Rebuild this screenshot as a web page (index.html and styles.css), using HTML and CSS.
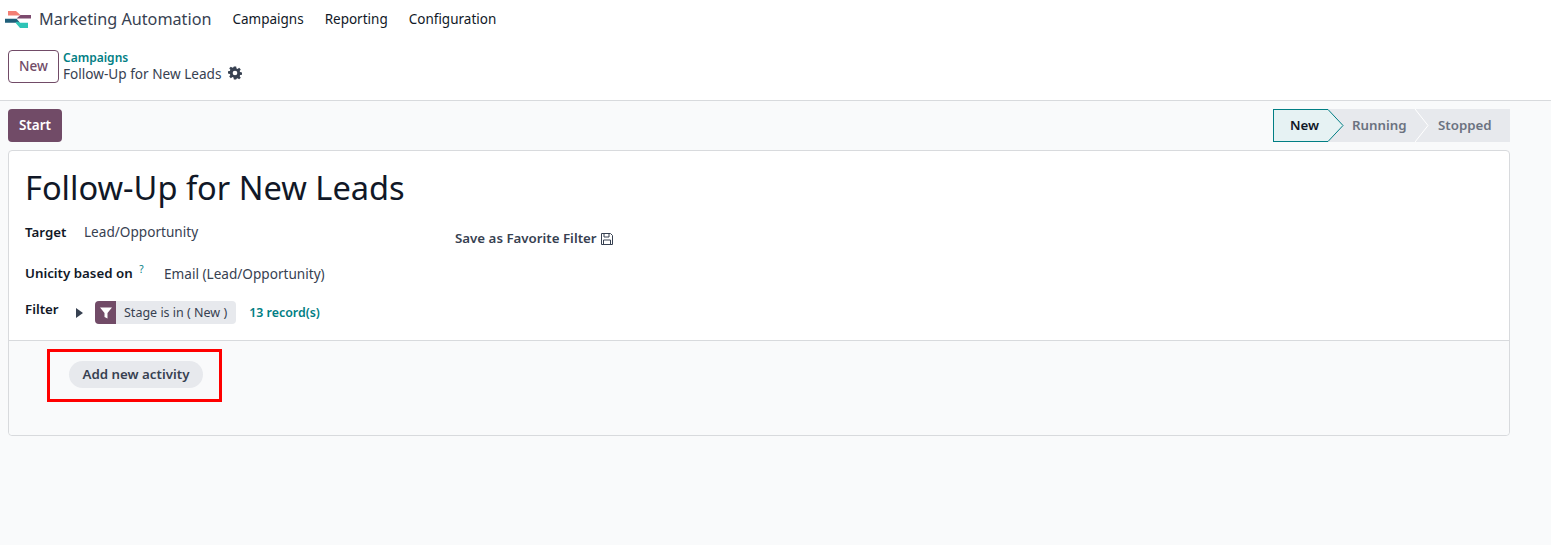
FILE: index.html
```html
<!DOCTYPE html>
<html lang="en">
<head>
    <meta charset="UTF-8" />
    <title>Marketing Automation</title>
    <link rel="stylesheet" href="styles.css">
</head>
<body>
    <header class="navbar">
        <svg class="app-logo" width="26" height="18" viewBox="0 0 26 18">
            <path d="M3 1h8l5 4.500H3z" fill="#f27f74"/>
            <path d="M15.500 5H26v3.500H11.500z" fill="#7c4a6e"/>
            <path d="M0 8.800h11.500l3.500 3.900H0z" fill="#1f5f7a"/>
            <path d="M10.500 12.800L12 11.500l3 1.300h8V18h-8z" fill="#2ec4b6"/>
        </svg>
        <span class="app-name">Marketing Automation</span>
        <nav class="menu">
            <a>Campaigns</a>
            <a>Reporting</a>
            <a>Configuration</a>
        </nav>
    </header>

    <div class="control-panel">
        <button class="btn-new">New</button>
        <div class="breadcrumb">
            <a class="crumb-link">Campaigns</a>
            <div class="crumb-current">
                Follow-Up for New Leads
                <svg width="14" height="14" viewBox="0 0 24 24"><path fill="#374151" fill-rule="evenodd" d="M10 1h4l.6 3.200 1.800.8L19.100 3.100l2.800 2.800-1.900 2.700.8 1.800 3.200.6v4l-3.200.6-.8 1.800 1.900 2.700-2.800 2.800-2.700-1.900-1.800.8L14 23h-4l-.6-3.200-1.800-.8-2.700 1.900-2.800-2.800L4 15.400l-.8-1.800L0 13V9l3.200-.6.8-1.800-1.900-2.700 2.800-2.800L7.600 3l1.800-.8zM12 8a4 4 0 1 0 0 8 4 4 0 0 0 0-8z"/></svg>
            </div>
        </div>
    </div>

    <main class="content">
        <div class="status-row">
            <button class="btn-start">Start</button>
            <div class="statusbar">
                <span class="stage stage-new">
                    New
                    <svg class="tip" width="16" height="33" viewBox="0 0 16 33"><path d="M0 .5L15 16.500 0 32.500" fill="#e6f2f3" stroke="#017e84"/></svg>
                </span>
                <span class="stage stage-running">
                    Running
                    <svg class="tip" width="14" height="33" viewBox="0 0 14 33"><path d="M0 0L13 16.500 0 33" fill="none" stroke="#fff"/></svg>
                </span>
                <span class="stage stage-stopped">Stopped</span>
            </div>
        </div>

        <section class="sheet">
            <div class="sheet-top">
                <h1>Follow-Up for New Leads</h1>
                <div class="fields">
                    <div class="field-col">
                        <div class="field field-target">
                            <label>Target</label>
                            <span>Lead/Opportunity</span>
                        </div>
                        <div class="field field-unicity">
                            <label>Unicity based on <sup>?</sup></label>
                            <span class="value">Email (Lead/Opportunity)</span>
                        </div>
                        <div class="field field-filter">
                            <label>Filter</label>
                            <i class="caret"></i>
                            <span class="tag">
                                <span class="tag-icon">
                                    <svg width="12" height="12" viewBox="0 0 12 12"><path fill="#fff" d="M0 .5h12L7.500 6v5.500l-3-1.500V6z"/></svg>
                                </span>
                                <span class="tag-text">Stage is in ( New )</span>
                            </span>
                            <a class="records">13 record(s)</a>
                        </div>
                    </div>
                    <div class="save-filter">
                        Save as Favorite Filter
                        <svg width="12" height="12" viewBox="0 0 12 12"><path fill="none" stroke="#374151" d="M.5.500h9l2 2v9H.500z M3 .500v3.500h5V.500 M2.500 11.500V7h7v4.500"/></svg>
                    </div>
                </div>
            </div>
            <div class="sheet-bottom">
                <div class="highlight">
                    <button class="btn-activity">Add new activity</button>
                </div>
            </div>
        </section>
    </main>
</body>
</html>
```

FILE: styles.css
```css
* {
    box-sizing: border-box;
}

body {
    margin: 0;
    height: 545px;
    overflow: hidden;
    background: #f9fafb;
    font-family: "Noto Sans", sans-serif;
    font-size: 13px;
    color: #374151;
}

button {
    font-family: inherit;
    cursor: pointer;
}

.navbar {
    display: flex;
    align-items: center;
    height: 37px;
    padding-left: 5px;
    background: #fff;
}

.app-logo {
    margin-right: 8px;
}

.app-name {
    font-size: 16.200px;
    color: #374151;
}

.menu {
    display: flex;
    gap: 21px;
    margin-left: 21px;
    color: #111827;
    font-size: 13.500px;
}

.control-panel {
    display: flex;
    align-items: center;
    gap: 4px;
    height: 64px;
    padding: 0 8px 4px;
    background: #fff;
    border-bottom: 1px solid #d8dadd;
}

.btn-new {
    width: 51px;
    height: 33px;
    padding: 0 0 2px;
    background: #fff;
    border: 1px solid #714b67;
    border-radius: 4px;
    color: #714b67;
    font-size: 13.500px;
    font-weight: 500;
}

.breadcrumb {
    display: flex;
    flex-direction: column;
    padding-bottom: 2px;
}

.crumb-link {
    color: #017e84;
    font-size: 12px;
    font-weight: 600;
    line-height: 15px;
}

.crumb-current {
    display: flex;
    align-items: center;
    gap: 7px;
    font-size: 13.600px;
    line-height: 17px;
}

.content {
    padding: 8px 41px 0 8px;
}

.status-row {
    display: flex;
    justify-content: space-between;
    align-items: center;
    height: 33px;
    margin-bottom: 8px;
}

.btn-start {
    width: 54px;
    height: 33px;
    padding: 0 0 2px;
    background: #714b67;
    border: none;
    border-radius: 4px;
    color: #fff;
    font-size: 13.500px;
    font-weight: 600;
}

.statusbar {
    display: flex;
    height: 33px;
    background: #e7e9ed;
    color: #6b7280;
    font-size: 13.300px;
    font-weight: 600;
}

.stage {
    display: flex;
    align-items: center;
    position: relative;
    padding-bottom: 2px;
}

.stage-new {
    width: 55px;
    padding-left: 16px;
    background: #e6f2f3;
    border: 1px solid #017e84;
    border-right: none;
    color: #111827;
}

/* arrow tips hang over the next stage */
.tip {
    position: absolute;
    left: 100%;
    top: 0;
}

.stage-new .tip {
    top: -1px;
}

.stage-running {
    width: 87px;
    padding-left: 24px;
}

.stage-stopped {
    width: 95px;
    padding-left: 23px;
}

.sheet {
    height: 286px;
    background: #fff;
    border: 1px solid #d8dadd;
    border-radius: 4px;
}

.sheet-top {
    height: 190px;
    padding: 16px 16px 0;
    border-bottom: 1px solid #d8dadd;
}

h1 {
    margin: 0 0 12px;
    font-size: 32.600px;
    font-weight: 400;
    line-height: 42px;
    color: #111827;
}

.fields {
    display: flex;
}

.field-col {
    width: 430px;
}

.field {
    display: flex;
    align-items: center;
    font-size: 13.600px;
}

.field label {
    font-size: 13.300px;
    font-weight: 600;
    color: #111827;
}

.field-target {
    height: 20px;
    margin-bottom: 21px;
}

.field-target label {
    width: 59px;
    padding-top: 2px;
}

.field-unicity {
    height: 20px;
    margin-bottom: 18px;
}

.field-unicity label {
    width: 139px;
}

.value {
    margin-top: 2px;
}

sup {
    margin-left: 3px;
    color: #017e84;
    font-size: 10px;
    font-weight: 400;
}

.field-filter label {
    width: 51px;
    padding-bottom: 7px;
}

.caret {
    width: 0;
    height: 0;
    margin-right: 12px;
    border-left: 7px solid #374151;
    border-top: 5px solid transparent;
    border-bottom: 5px solid transparent;
}

.tag {
    display: flex;
    align-items: center;
    height: 23px;
    background: #e7e9ed;
    border-radius: 4px;
    overflow: hidden;
    font-size: 12.500px;
}

.tag-icon {
    display: flex;
    align-items: center;
    justify-content: center;
    width: 21px;
    height: 100%;
    background: #714b67;
}

.tag-text {
    padding: 0 9px 0 8px;
}

.records {
    margin-left: 13px;
    color: #017e84;
    font-size: 12.400px;
    font-weight: 600;
}

.save-filter {
    display: flex;
    align-items: flex-start;
    gap: 4px;
    margin-top: 7.500px;
    font-size: 13.300px;
    font-weight: 600;
}

.save-filter svg {
    margin-top: 4px;
}

.sheet-bottom {
    height: 94px;
    padding: 8px 0 0 38px;
    background: #f9fafb;
    border-radius: 0 0 4px 4px;
}

.highlight {
    width: 175px;
    height: 53px;
    padding: 9px 0 0 19px;
    border: 3px solid #ff0000;
}

.btn-activity {
    width: 134px;
    height: 27px;
    padding: 0 0 1px;
    background: #e7e9ed;
    border: none;
    border-radius: 14px;
    color: #374151;
    font-size: 13.300px;
    font-weight: 600;
}
```
